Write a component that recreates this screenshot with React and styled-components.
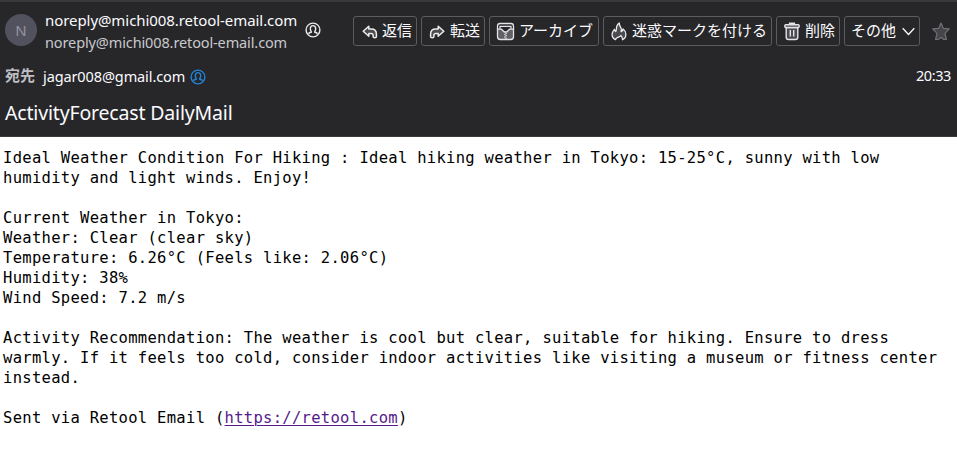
import React from 'react';
import styled, { createGlobalStyle } from 'styled-components';

const GlobalStyle = createGlobalStyle`
  * { box-sizing: border-box; }
  html, body { margin: 0; background: #fff; }
  body { font-family: "Noto Sans", "Noto Sans CJK JP", sans-serif; }
`;

const Page = styled.div`
  width: 957px;
  height: 455px;
  overflow: hidden;
  background: #fff;
`;

const Header = styled.header`
  height: 137px;
  background: #27272a;
  border-top: 2px solid #38383d;
  border-bottom: 1px solid #3a3a3f;
  color: #fbfbfe;
`;

const TopRow = styled.div`
  display: flex;
  align-items: flex-start;
  height: 60px;
  padding: 0 7px 0 5px;
`;

const Avatar = styled.div`
  flex: none;
  width: 32px;
  height: 32px;
  margin-top: 12px;
  border-radius: 50%;
  background: #52525e;
  color: #94949f;
  font-size: 15px;
  line-height: 33px;
  text-align: center;
`;

const Sender = styled.div`
  flex: none;
  width: 268px;
  padding: 7px 0 0 8px;
`;

const Line = styled.div`
  height: 22px;
  line-height: 22px;
  font-size: ${(p) => p.$size}px;
  letter-spacing: ${(p) => p.$track}px;
  color: ${(p) => p.$color};
  white-space: nowrap;
`;

const ContactSlot = styled.div`
  width: 16px;
  height: 16px;
  margin-top: ${(p) => p.$top}px;
  svg { display: block; }
`;

const Toolbar = styled.div`
  display: flex;
  gap: 4px;
  margin: 14px 0 0 32px;
`;

const Button = styled.button`
  display: flex;
  align-items: center;
  width: ${(p) => p.$width}px;
  height: 30px;
  margin: 0;
  padding: 0 0 0 ${(p) => p.$pad}px;
  border: 1px solid #5b5b60;
  border-radius: 3px;
  background: #27272a;
  color: #fbfbfe;
  font-family: "Noto Sans CJK JP", sans-serif;
  font-size: 15px;
  line-height: 28px;
  white-space: nowrap;
  svg { flex: none; margin-top: 1px; }
`;

const Label = styled.span`
  margin: 0 ${(p) => p.$after || 0}px 3px ${(p) => p.$before || 0}px;
`;

const StarSlot = styled.div`
  margin: 20px 0 0 auto;
  svg { display: block; }
`;

const RecipientRow = styled.div`
  display: flex;
  align-items: center;
  height: 28px;
  padding: 0 6px 0 5px;
  font-size: 14.5px;
`;

const FieldName = styled.span`
  width: 38px;
  padding-bottom: 3px;
  color: #bfbfc3;
  font-family: "Noto Sans CJK JP", sans-serif;
  font-weight: 700;
  font-size: 15px;
`;

const Recipient = styled.span`
  width: 147px;
  letter-spacing: -0.11px;
  white-space: nowrap;
`;

const Time = styled.time`
  margin: 0 0 2px auto;
  letter-spacing: -0.4px;
`;

const Subject = styled.h1`
  margin: 0;
  padding: 10px 0 0 5px;
  font-size: 19.5px;
  font-weight: 400;
  line-height: 26px;
  letter-spacing: -0.17px;
`;

const Message = styled.main`
  padding: 11px 0 0 3px;
  color: #000;
  font-family: "DejaVu Sans Mono", monospace;
  font-size: 15.5px;
  line-height: 20px;
  letter-spacing: 0.3px;
  white-space: pre;
`;

const TextLine = styled.div`
  height: 20px;
`;

const Link = styled.a`
  color: #551a8b;
  text-decoration: underline;
  text-decoration-thickness: 1px;
  text-underline-offset: 2px;
`;

function Contact({ color }) {
  return (
    <svg width="16" height="16" viewBox="0 0 16 16" fill="none" stroke={color} strokeWidth="1.4">
      <circle cx="8" cy="8" r="6.9" />
      <path d="M4 12.200v-.9c0-.5.4-.8.9-.8h.7c.8 0 1-.5.6-1C5 7.900 4.600 3.600 8 3.600s3 4.300 1.800 5.900c-.4.5-.2 1 .6 1h.7c.5 0 .9.3.9.8v.9" />
    </svg>
  );
}

function Arrow({ flip }) {
  return (
    <svg width="16" height="14" viewBox="0 0 16 14" fill="#4b4b50" stroke="#ececef" strokeWidth="1.5" strokeLinejoin="round">
      <path
        transform={flip ? 'translate(16 0) scale(-1 1)' : undefined}
        d="M6.800 1.300 1.200 6.300l5.600 5V8.400h2.400c1.300 0 1.900.7 1.900 1.900v1.500c0 1.400 3.300 1.400 3.300 0V9.300c0-3.500-1.800-5.200-5.200-5.200H6.800z"
      />
    </svg>
  );
}

function Archive() {
  return (
    <svg width="19" height="19" viewBox="0 0 19 19" fill="none" stroke="#e4e4e8" strokeWidth="1.3" strokeLinejoin="round">
      <path fill="#606065" d="M1.500 7.200h4L8 9.800h3l2.500-2.600h4v7.600q0 2.700-2.700 2.700H4.200q-2.700 0-2.700-2.700z" />
      <path d="M1.500 7.500V4.200q0-2.700 2.700-2.700h10.600q2.700 0 2.700 2.700v3.300M4 6.800V4.300h11v2.500" />
      <path strokeDasharray="1.200 1.200" strokeWidth="1.400" d="M8.900 9.500v8" />
      <path strokeDasharray="1.200 1.200" strokeDashoffset="1.200" strokeWidth="1.400" d="M10.100 9.500v8" />
    </svg>
  );
}

function Flame() {
  return (
    <svg width="16" height="19" viewBox="0 0 16 19" fill="#4b4b50" stroke="#ececef" strokeWidth="1.300" strokeLinejoin="round">
      <path d="M4.500 17.700C2.200 16.600 1 14.700 1.100 12.300c0-2 .9-3.300 2.300-5 .1 1 .5 1.700 1.300 2.300 1.200-2 .5-3.700 1.100-5.400C6.300 2.700 7 1.900 8.300 1c-.3 2.300 1 3.500 1.700 5 .6 1.400.5 2.400.1 3.700 1-.5 1.700-1.200 2-2.700 2.100 1.600 2.800 3.500 2.800 5.500 0 2.400-1.200 4.100-3.400 5.200.3-1.900-.3-3-1.700-4.300-.4 1.300-1.300 1.300-2.600 1.800-1.500.6-2.700 1.200-2.700 2.500z" />
    </svg>
  );
}

function Trash() {
  return (
    <svg width="16" height="19" viewBox="0 0 16 19" fill="#4b4b50" stroke="#e4e4e8" strokeWidth="1.4" strokeLinejoin="round">
      <path d="M5.500 3V1.300h5V3M2.200 5.500h11.600v9.700q0 2.300-2.300 2.300h-7q-2.300 0-2.300-2.300z" />
      <rect x=".8" y="2.800" width="14.400" height="2.700" rx="1" />
      <path d="M6.300 8v6.500M9.700 8v6.500" />
    </svg>
  );
}

function Chevron() {
  return (
    <svg width="13" height="9" viewBox="0 0 13 9" fill="none" stroke="#fbfbfe" strokeWidth="1.300">
      <path d="M.7 1.200 6.500 7.500l5.800-6.300" />
    </svg>
  );
}

function Star() {
  return (
    <svg width="18" height="19" viewBox="0 0 18 19" fill="#45454a" stroke="#707075" strokeWidth="1.200" strokeLinejoin="round">
      <path d="M9 1 11.300 6.300l6 .5-4.300 4.500 1.400 6.200H11.800L9 15.500l-2.800 2H3.600L5 11.300.7 6.800l6-.5z" />
    </svg>
  );
}

const LINES = [
  'Ideal Weather Condition For Hiking : Ideal hiking weather in Tokyo: 15-25°C, sunny with low',
  'humidity and light winds. Enjoy!',
  '',
  'Current Weather in Tokyo:',
  'Weather: Clear (clear sky)',
  'Temperature: 6.26°C (Feels like: 2.06°C)',
  'Humidity: 38%',
  'Wind Speed: 7.2 m/s',
  '',
  'Activity Recommendation: The weather is cool but clear, suitable for hiking. Ensure to dress',
  'warmly. If it feels too cold, consider indoor activities like visiting a museum or fitness center',
  'instead.',
  '',
];

export default function App() {
  return (
    <Page>
      <GlobalStyle />
      <Header>
        <TopRow>
          <Avatar>N</Avatar>
          <Sender>
            <Line $size={15} $track={-0.07} $color="#fbfbfe">noreply@michi008.retool-email.com</Line>
            <Line $size={14.5} $track={-0.12} $color="#c9c9cd">noreply@michi008.retool-email.com</Line>
          </Sender>
          <ContactSlot $top={20}><Contact color="#ededf0" /></ContactSlot>
          <Toolbar>
            <Button $width={64} $pad={8}><Arrow /><Label $before={4}>返信</Label></Button>
            <Button $width={64} $pad={7}><Arrow flip /><Label $before={5}>転送</Label></Button>
            <Button $width={110} $pad={6}><Archive /><Label $before={4}>アーカイブ</Label></Button>
            <Button $width={169} $pad={7}><Flame /><Label $before={5}>迷惑マークを付ける</Label></Button>
            <Button $width={64} $pad={7}><Trash /><Label $before={5}>削除</Label></Button>
            <Button $width={76} $pad={6}><Label $after={6}>その他</Label><Chevron /></Button>
          </Toolbar>
          <StarSlot><Star /></StarSlot>
        </TopRow>
        <RecipientRow>
          <FieldName>宛先</FieldName>
          <Recipient>jagar008@gmail.com</Recipient>
          <ContactSlot $top={2}><Contact color="#2383d8" /></ContactSlot>
          <Time>20:33</Time>
        </RecipientRow>
        <Subject>ActivityForecast DailyMail</Subject>
      </Header>
      <Message>
        {LINES.map((line, i) => <TextLine key={i}>{line}</TextLine>)}
        <TextLine>Sent via Retool Email (<Link href="#">https://retool.com</Link>)</TextLine>
      </Message>
    </Page>
  );
}
